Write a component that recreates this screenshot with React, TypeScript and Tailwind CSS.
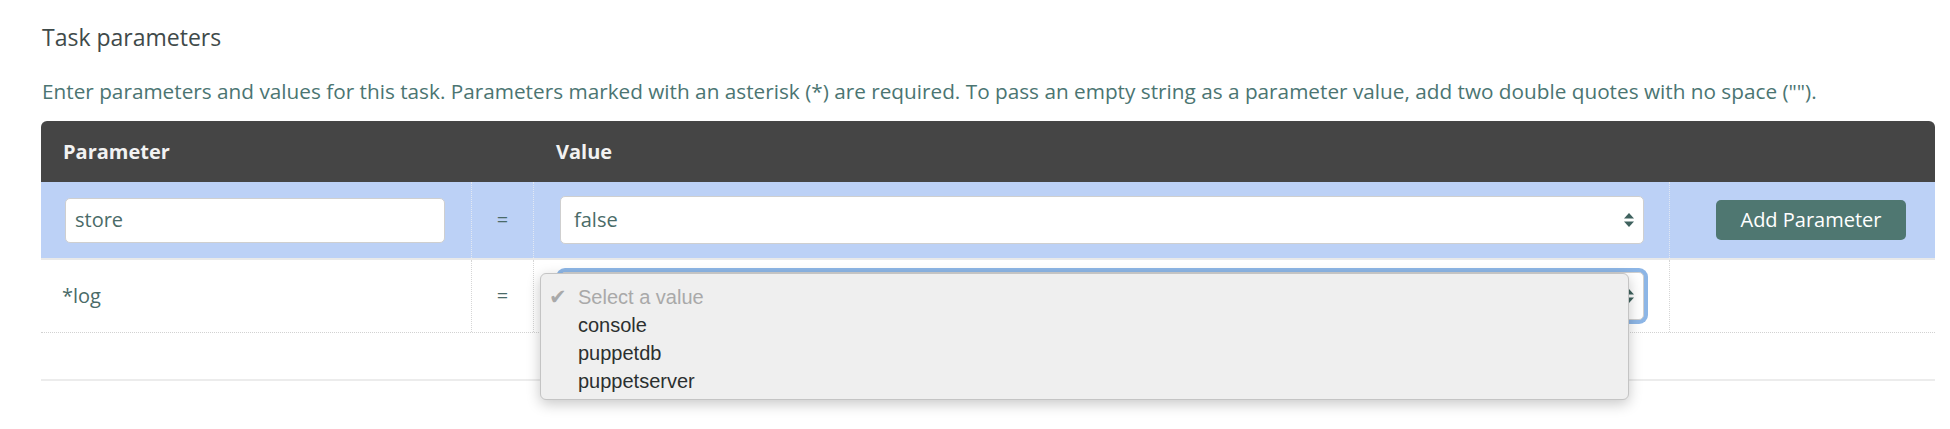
import React from "react";

const options = ["console", "puppetdb", "puppetserver"];

const SelectArrows: React.FC = () => (
  <svg width="12" height="16" viewBox="0 0 12 16" className="shrink-0">
    <path d="M6 1 L11 6.5 H1 Z" fill="#3f625e" />
    <path d="M6 15 L11 9.5 H1 Z" fill="#3f625e" />
  </svg>
);

const ValueSelect: React.FC<{ value?: string; focused?: boolean }> = ({
  value,
  focused,
}) => (
  <div
    className={
      focused
        ? "flex-1 h-[48px] flex items-center justify-between pl-[13px] pr-[8px] bg-white rounded-[5px] border border-[#cfcfcf] ring-4 ring-[#8db6e6]"
        : "flex-1 h-[48px] flex items-center justify-between pl-[13px] pr-[8px] bg-white rounded-[5px] border border-[#cfcfcf]"
    }
  >
    <span className="text-[20px] text-[#4a6b68]">{value}</span>
    <SelectArrows />
  </div>
);

const App: React.FC = () => {
  return (
    <div className="w-[1950px] h-[429px] bg-white px-[41px] pt-[22px] font-['Open_Sans',sans-serif]">
      <h2 className="text-[23px] leading-[30px] text-[#3f4a4a] ml-[1px]">Task parameters</h2>
      <p className="mt-[25px] text-[20.75px] leading-[28px] text-[#4b7572] ml-[1px] whitespace-nowrap">
        Enter parameters and values for this task. Parameters marked with an asterisk (*) are
        required. To pass an empty string as a parameter value, add two double quotes with no space
        ("").
      </p>

      <div className="mt-[16px] w-[1894px]">
        {/* header */}
        <div className="grid grid-cols-[431px_62px_1136px_265px] h-[61px] bg-[#454545] rounded-t-[6px] items-center text-[20px] font-bold text-[#f2f2f2]">
          <div className="pl-[22px]">Parameter</div>
          <div />
          <div className="pl-[22px]">Value</div>
          <div />
        </div>

        {/* row 1 */}
        <div className="grid grid-cols-[431px_62px_1136px_265px] h-[78px] bg-[#bcd1f6] border-b-2 border-[#e9e9e9]">
          <div className="flex items-center pl-[24px] pr-[26px] border-r border-dotted border-[#e2e8f2]">
            <div className="flex-1 h-[45px] flex items-center pl-[9px] bg-white rounded-[5px] border border-[#cfcfcf] text-[20px] text-[#4a6b68]">
              store
            </div>
          </div>
          <div className="flex items-center justify-center text-[20px] text-[#4a6b68] border-r border-dotted border-[#e2e8f2]">
            =
          </div>
          <div className="flex items-center pl-[26px] pr-[25px] border-r border-dotted border-[#e2e8f2]">
            <ValueSelect value="false" />
          </div>
          <div className="flex items-center pl-[46px]">
            <button className="w-[190px] h-[40px] rounded-[5px] bg-[#4f7771] text-white text-[20px]">
              Add Parameter
            </button>
          </div>
        </div>

        {/* row 2 */}
        <div className="grid grid-cols-[431px_62px_1136px_265px] h-[73px] border-b border-dotted border-[#d2d2d2]">
          <div className="flex items-center pl-[21px] text-[20px] text-[#4a6b68] border-r border-dotted border-[#d6d6d6]">
            *log
          </div>
          <div className="flex items-center justify-center text-[20px] text-[#4a6b68] border-r border-dotted border-[#d6d6d6]">
            =
          </div>
          <div className="relative flex items-center pl-[26px] pr-[25px] border-r border-dotted border-[#d6d6d6]">
            <ValueSelect focused />
            <div className="absolute left-[6px] top-[13px] w-[1089px] h-[127px] z-10 bg-[#efefef] rounded-[6px] border border-[#c4c4c4] shadow-[0_4px_14px_rgba(0,0,0,0.22)] pt-[9px] font-['Liberation_Sans',sans-serif] text-[20px] leading-[28px]">
              <div className="flex items-center text-[#a9a9a9]">
                <span className="w-[37px] pl-[8px] text-[21px] font-['DejaVu_Sans',sans-serif]">✔</span>
                <span>Select a value</span>
              </div>
              {options.map((o) => (
                <div key={o} className="pl-[37px] text-[#2b2f2f]">
                  {o}
                </div>
              ))}
            </div>
          </div>
          <div />
        </div>

        <div className="h-[48px] border-b-2 border-[#ececec]" />
      </div>
    </div>
  );
};

export default App;
